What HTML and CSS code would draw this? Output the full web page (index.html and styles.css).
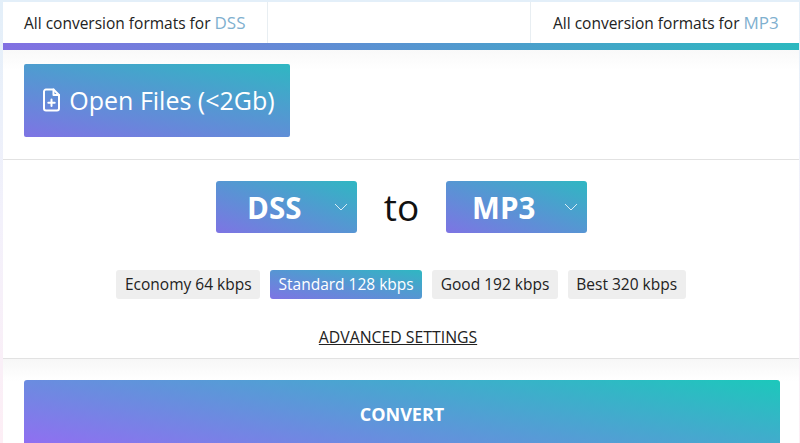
FILE: index.html
```html
<!DOCTYPE html>
<html lang="en">
<head>
  <meta charset="UTF-8">
  <meta name="viewport" content="width=device-width, initial-scale=1.0">
  <title>DSS to MP3</title>
  <link rel="stylesheet" href="styles.css">
</head>
<body>
  <div class="card">
    <div class="tabs">
      <div class="tab tab-left">All conversion formats for <span class="fmt">DSS</span></div>
      <div class="tab tab-right">All conversion formats for <span class="fmt">MP3</span></div>
    </div>
    <div class="tabs-bar"></div>

    <div class="section open-section">
      <button class="open-btn">
        <svg class="file-icon" viewBox="0 0 18 24" width="19" height="24" fill="none" stroke="currentColor" stroke-width="2" stroke-linejoin="round" stroke-linecap="round">
          <path d="M3.500 1.500h7.500l5.500 5.500v13.500a2 2 0 0 1-2 2h-11a2 2 0 0 1-2-2v-17a2 2 0 0 1 2-2z"/>
          <path d="M11 1.500v5.500h5.500"/>
          <path d="M9 11.500v6.500M5.800 14.700h6.400"/>
        </svg>
        Open Files (&lt;2Gb)
      </button>
    </div>

    <div class="section convert-section">
      <div class="format-row">
        <div class="format-select">
          <span class="format-name">DSS</span>
          <svg class="chevron" viewBox="0 0 14 8" width="14" height="8" fill="none" stroke="currentColor" stroke-width="1"><path d="M1 1l6 6 6-6"/></svg>
        </div>
        <span class="to">to</span>
        <div class="format-select">
          <span class="format-name">MP3</span>
          <svg class="chevron" viewBox="0 0 14 8" width="14" height="8" fill="none" stroke="currentColor" stroke-width="1"><path d="M1 1l6 6 6-6"/></svg>
        </div>
      </div>
      <div class="quality-row">
        <span class="chip">Economy 64 kbps</span>
        <span class="chip selected">Standard 128 kbps</span>
        <span class="chip">Good 192 kbps</span>
        <span class="chip">Best 320 kbps</span>
      </div>
      <a class="advanced" href="#">ADVANCED SETTINGS</a>
    </div>

    <div class="convert-wrap">
      <button class="convert-btn">CONVERT</button>
    </div>
  </div>
</body>
</html>
```

FILE: styles.css
```css
html, body {
  height: 100%;
}
body {
  margin: 0;
  overflow: hidden;
  font-family: 'Open Sans', 'Noto Sans', sans-serif;
  color: #222;
  background: linear-gradient(180deg, #e3eff9 0%, #f3f1fb 50%, #fdeef5 100%);
}
button {
  font-family: inherit;
  border: none;
  color: #fff;
}
.card {
  margin: 2px 1px 0 3px;
  background: #fff;
  height: 600px;
}
.tabs {
  display: flex;
  justify-content: space-between;
  height: 41px;
}
.tab {
  display: flex;
  align-items: center;
  font-size: 15.5px;
  white-space: pre;
  color: #222;
}
.tab-left {
  width: 243px;
  padding-left: 21px;
  border-right: 1px solid #e8eef2;
}
.tab-right {
  width: 246px;
  padding-left: 22px;
  border-left: 1px solid #e8eef2;
}
.fmt {
  font-size: 17px;
  color: #7fb0cf;
}
.tabs-bar {
  height: 7px;
  background: linear-gradient(90deg, #8270e2, #2cb8bf);
}
.section {
  border-bottom: 1px solid #e2e2e2;
}
.open-section {
  padding: 14px 21px 22px;
  background: linear-gradient(180deg, #f9f9f9 0, #fff 20px);
}
.open-btn {
  display: flex;
  align-items: center;
  justify-content: center;
  gap: 8px;
  width: 266px;
  height: 73px;
  padding: 0 0 2px 3px;
  font-size: 25px;
  border-radius: 2px;
  background: linear-gradient(10deg, #7e74e4, #2fb7c2);
}
.file-icon {
  flex: none;
}
.convert-section {
  display: flex;
  flex-direction: column;
  align-items: center;
  padding: 21px 0 10px;
}
.format-row {
  display: flex;
  align-items: center;
  gap: 26.5px;
  padding-left: 1px;
}
.format-select {
  display: flex;
  align-items: center;
  width: 141px;
  height: 52px;
  border-radius: 3px;
  color: #fff;
  background: linear-gradient(to top right, #7e74e4, #2fb7c2);
}
.format-name {
  width: 116px;
  text-align: center;
  font-size: 29.5px;
  font-weight: 700;
}
.chevron {
  margin-left: 2px;
  opacity: 0.8;
}
.to {
  font-size: 37px;
  line-height: 52px;
  color: #111;
}
.quality-row {
  display: flex;
  gap: 10px;
  margin-top: 37px;
}
.chip {
  display: block;
  padding: 0 8.5px;
  height: 29px;
  line-height: 29px;
  font-size: 15.5px;
  border-radius: 3px;
  background: #eee;
  color: #222;
}
.chip.selected {
  color: #fff;
  background: linear-gradient(to top right, #7e74e4, #2fb7c2);
}
.advanced {
  margin: 28px 6px 0 0;
  font-size: 15.8px;
  line-height: 21px;
  color: #222;
}
.convert-wrap {
  padding: 21px 19px 0 21px;
  background: linear-gradient(180deg, #f7f7f7 0, #fff 22px);
}
.convert-btn {
  display: block;
  width: 100%;
  height: 70px;
  padding: 0 0 2px;
  font-size: 18px;
  font-weight: 700;
  border-radius: 3px;
  background: linear-gradient(10deg, #946cf3, #1cc8bb);
}
```
